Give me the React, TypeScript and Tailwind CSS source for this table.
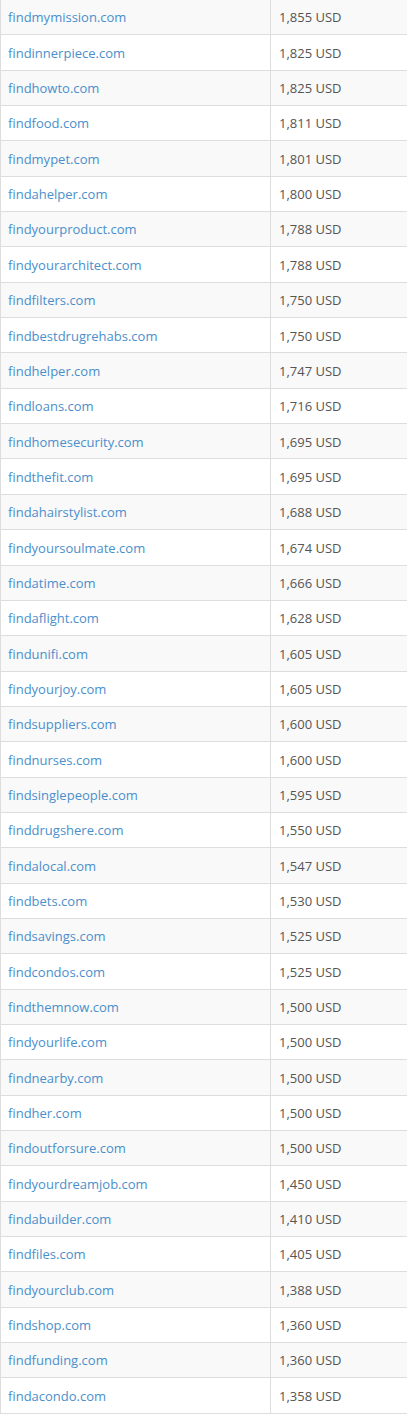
const rows: [string, string][] = [
  ["findmymission.com", "1,855"],
  ["findinnerpiece.com", "1,825"],
  ["findhowto.com", "1,825"],
  ["findfood.com", "1,811"],
  ["findmypet.com", "1,801"],
  ["findahelper.com", "1,800"],
  ["findyourproduct.com", "1,788"],
  ["findyourarchitect.com", "1,788"],
  ["findfilters.com", "1,750"],
  ["findbestdrugrehabs.com", "1,750"],
  ["findhelper.com", "1,747"],
  ["findloans.com", "1,716"],
  ["findhomesecurity.com", "1,695"],
  ["findthefit.com", "1,695"],
  ["findahairstylist.com", "1,688"],
  ["findyoursoulmate.com", "1,674"],
  ["findatime.com", "1,666"],
  ["findaflight.com", "1,628"],
  ["findunifi.com", "1,605"],
  ["findyourjoy.com", "1,605"],
  ["findsuppliers.com", "1,600"],
  ["findnurses.com", "1,600"],
  ["findsinglepeople.com", "1,595"],
  ["finddrugshere.com", "1,550"],
  ["findalocal.com", "1,547"],
  ["findbets.com", "1,530"],
  ["findsavings.com", "1,525"],
  ["findcondos.com", "1,525"],
  ["findthemnow.com", "1,500"],
  ["findyourlife.com", "1,500"],
  ["findnearby.com", "1,500"],
  ["findher.com", "1,500"],
  ["findoutforsure.com", "1,500"],
  ["findyourdreamjob.com", "1,450"],
  ["findabuilder.com", "1,410"],
  ["findfiles.com", "1,405"],
  ["findyourclub.com", "1,388"],
  ["findshop.com", "1,360"],
  ["findfunding.com", "1,360"],
  ["findacondo.com", "1,358"],
];

export default function App() {
  return (
    <div className="w-[407px] overflow-hidden bg-white font-['Open_Sans',sans-serif] text-[13px]">
      {rows.map(([domain, price], i) => (
        <div
          key={domain}
          className={`flex h-[35.35px] border-b border-[#dddddd] ${
            i % 2 === 0 ? "bg-[#f9f9f9]" : "bg-white"
          }`}
        >
          <div className="flex w-[271px] shrink-0 items-center border-l border-r border-[#dddddd] pl-[7px] pt-[2px]">
            <a href="#" className="text-[#4a8fcc]">
              {domain}
            </a>
          </div>
          <div className="flex flex-1 items-center pl-[8px] pt-[2px] text-[#555555]">
            {price} USD
          </div>
        </div>
      ))}
    </div>
  );
}
